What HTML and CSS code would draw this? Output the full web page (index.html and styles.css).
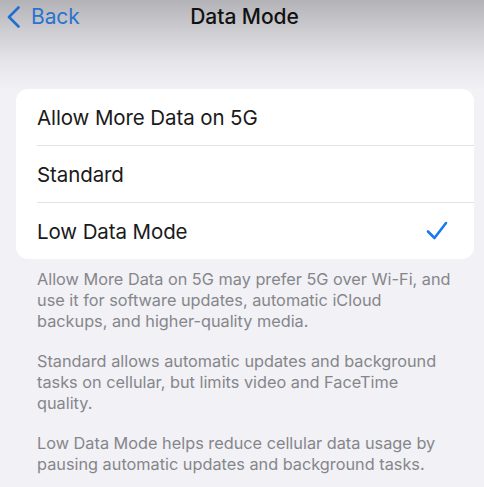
FILE: index.html
```html
<!DOCTYPE html>
<html>
<head>
<meta charset="utf-8">
<link rel="stylesheet" href="styles.css">
</head>
<body>
<div class="screen">
  <header class="nav">
    <div class="back">
      <svg class="chev" width="14" height="22" viewBox="0 0 14 22"><path d="M11.5 1.5 L2 11 L11.5 20.5" fill="none" stroke="#1f6fd0" stroke-width="2.6" stroke-linecap="round" stroke-linejoin="round"/></svg>
      <span class="back-label">Back</span>
    </div>
    <div class="title">Data Mode</div>
    <div class="spacer"></div>
  </header>
  <div class="card">
    <div class="row"><span class="label">Allow More Data on 5G</span></div>
    <div class="row"><span class="label">Standard</span></div>
    <div class="row last"><span class="label">Low Data Mode</span>
      <svg class="check" width="22" height="20" viewBox="0 0 22 20"><path d="M2 10.5 L8.5 17 L20 2" fill="none" stroke="#1a78f0" stroke-width="2.6" stroke-linecap="round" stroke-linejoin="round"/></svg>
    </div>
  </div>
  <div class="notes">
    <p>Allow More Data on 5G may prefer 5G over Wi-Fi, and use it for software updates, automatic iCloud backups, and higher-quality media.</p>
    <p>Standard allows automatic updates and background tasks on cellular, but limits video and FaceTime quality.</p>
    <p>Low Data Mode helps reduce cellular data usage by pausing automatic updates and background tasks.</p>
  </div>
</div>
</body>
</html>
```
FILE: styles.css
```css
html, body {
  margin: 0;
  padding: 0;
}
body {
  background: #f1f1f6;
  font-family: Inter, "Noto Sans", sans-serif;
  width: 484px;
  height: 487px;
  overflow: hidden;
}
.screen {
  display: flex;
  flex-direction: column;
}
.nav {
  height: 89px;
  display: grid;
  grid-template-columns: 1fr auto 1fr;
  align-items: start;
  background: linear-gradient(to bottom, #b3b3b7 0%, #cdcdd2 35%, #e5e5ea 70%, #f0f0f5 100%);
}
.back {
  display: flex;
  align-items: center;
  padding-left: 7px;
  padding-top: 6px;
  gap: 10px;
}
.back-label {
  color: #2a73cf;
  font-size: 21px;
  line-height: 22px;
  letter-spacing: -0.1px;
}
.title {
  padding-top: 6px;
  margin-left: 5px;
  font-size: 21px;
  line-height: 22px;
  font-weight: 500;
  color: #111;
  letter-spacing: -0.05px;
}
.card {
  margin: 0 10px 0 16px;
  background: #ffffff;
  border-radius: 12px;
  padding-left: 21px;
}
.row {
  height: 56px;
  display: flex;
  align-items: center;
  border-bottom: 1px solid #e2e2e6;
  padding-right: 26px;
  justify-content: space-between;
}
.row.last {
  border-bottom: none;
}
.label {
  font-size: 20.5px;
  color: #1a1a1a;
  letter-spacing: -0.1px;
}
.check {
  display: block;
}
.notes {
  padding: 10px 30px 0 37px;
  color: #86868a;
  font-size: 16.3px;
  line-height: 21px;
}
.notes p {
  margin: 0 0 19px 0;
}
```
